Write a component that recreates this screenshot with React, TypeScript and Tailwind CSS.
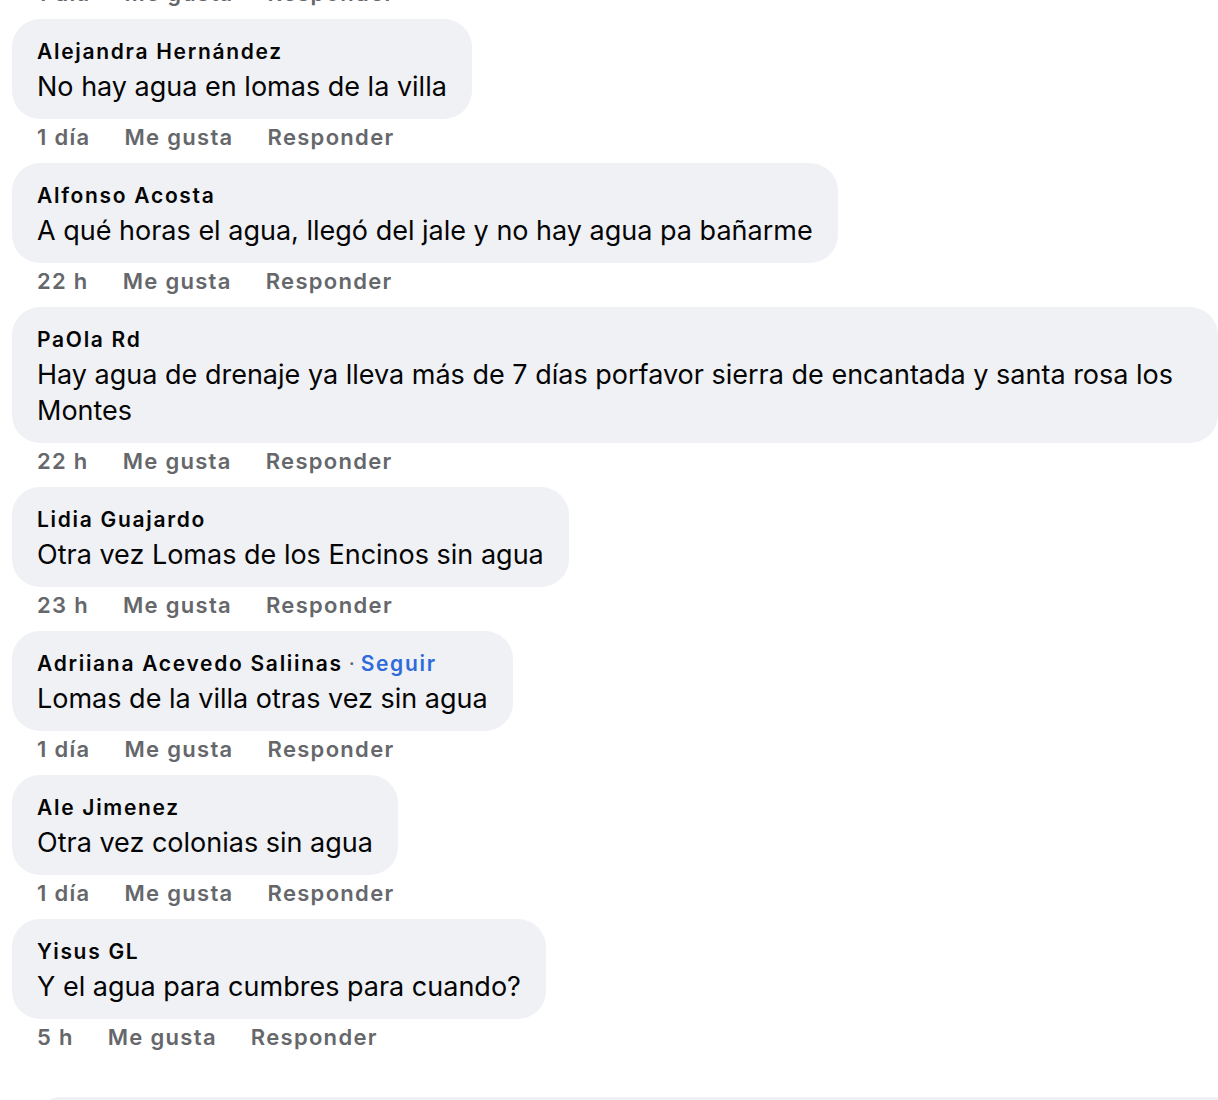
import React from "react";

type Comment = {
  name: string;
  text: string;
  time: string;
  follow?: boolean;
};

const comments: Comment[] = [
  { name: "Alejandra Hernández", text: "No hay agua en lomas de la villa", time: "1 día" },
  { name: "Alfonso Acosta", text: "A qué horas el agua, llegó del jale y no hay agua pa bañarme", time: "22 h" },
  {
    name: "PaOla Rd",
    text: "Hay agua de drenaje ya lleva más de 7 días porfavor sierra de encantada y santa rosa los Montes",
    time: "22 h",
  },
  { name: "Lidia Guajardo", text: "Otra vez Lomas de los Encinos sin agua", time: "23 h" },
  { name: "Adriiana Acevedo Saliinas", text: "Lomas de la villa otras vez sin agua", time: "1 día", follow: true },
  { name: "Ale Jimenez", text: "Otra vez colonias sin agua", time: "1 día" },
  { name: "Yisus GL", text: "Y el agua para cumbres para cuando?", time: "5 h" },
];

function Actions({ time }: { time: string }) {
  return (
    <div className="flex gap-[34px] pl-[37px] pt-[4px] pb-[12px] text-[22px] leading-[28px] font-semibold tracking-[1.3px] text-[#65676b]">
      <span>{time}</span>
      <span>Me gusta</span>
      <span>Responder</span>
    </div>
  );
}

function CommentItem({ c }: { c: Comment }) {
  return (
    <div>
      <div className="ml-[12px] inline-block max-w-[1234px] rounded-[28px] bg-[#f0f1f5] px-[25px] pt-[18px] pb-[14px]">
        <div className="text-[21px] leading-[30px] font-semibold tracking-[1.7px] text-[#050505]">
          {c.name}
          {c.follow && (
            <>
              <span className="font-normal tracking-normal text-[#65676b]"> · </span>
              <span className="text-[#2d6bdb]">Seguir</span>
            </>
          )}
        </div>
        <div className="mt-[2px] text-[27px] leading-[36px] text-[#050505]">{c.text}</div>
      </div>
      <Actions time={c.time} />
    </div>
  );
}

export default function App() {
  return (
    <div
      className="relative h-[1100px] w-[1218px] overflow-hidden bg-white"
      style={{ fontFamily: "Inter, 'Noto Sans', sans-serif" }}
    >
      {/* previous comment's actions, cut off at the top */}
      <div className="-mt-[25px]">
        <Actions time="1 día" />
      </div>
      {comments.map((c) => (
        <CommentItem key={c.name} c={c} />
      ))}
      {/* composer peeking in at the bottom */}
      <div className="absolute left-[40px] right-0 top-[1097px] h-[20px] rounded-tl-[20px] bg-[#f0f1f5]" />
    </div>
  );
}
